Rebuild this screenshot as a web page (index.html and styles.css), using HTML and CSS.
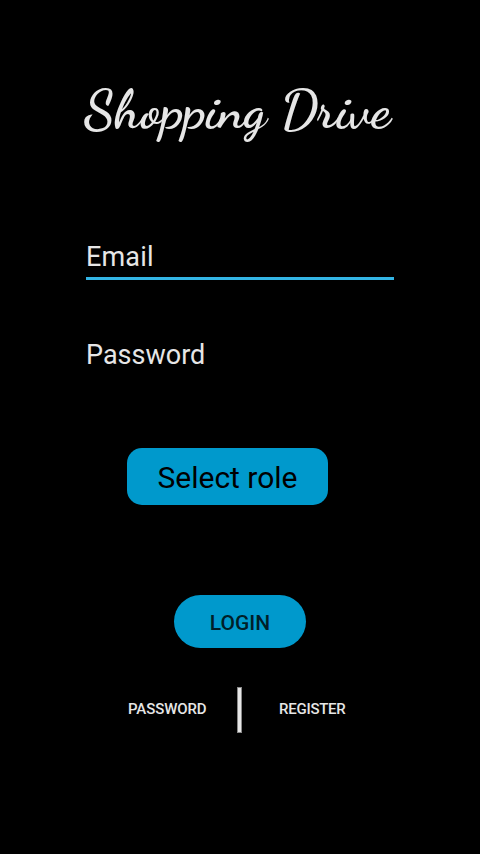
FILE: index.html
```
<!DOCTYPE html>
<html lang="en">
<head>
<meta charset="utf-8">
<title>Shopping Drive</title>
<link rel="stylesheet" href="styles.css">
</head>
<body>
<main class="screen">
  <h1 class="brand">Shopping Drive</h1>
  <form class="login-form">
    <div class="field field-active">Email</div>
    <div class="field">Password</div>
    <button class="role" type="button">Select role</button>
    <button class="login" type="button">LOGIN</button>
  </form>
  <nav class="links">
    <a class="link link-password">PASSWORD</a>
    <span class="divider"></span>
    <a class="link link-register">REGISTER</a>
  </nav>
</main>
</body>
</html>
```
FILE: styles.css
```
* { box-sizing: border-box; }
body {
  margin: 0;
  background: #000;
  color: #e6e6e6;
  font-family: Roboto, "Liberation Sans", sans-serif;
}
.screen {
  width: 480px;
  height: 854px;
  padding-top: 72px;
  display: flex;
  flex-direction: column;
  overflow: hidden;
}
.brand {
  margin: 0 0 0 84px;
  height: 76px;
  font: 700 54px/76px "Dancing Script", "Liberation Serif", serif;
  white-space: nowrap;
}
.login-form {
  margin-top: 88px;
  padding: 0 86px;
  display: flex;
  flex-direction: column;
}
.field {
  height: 44px;
  margin-bottom: 54px;
  font-size: 27px;
  line-height: 42px;
}
.field-active { border-bottom: 3px solid #33b5e5; letter-spacing: 0.15px; }
.role, .login {
  border: 0;
  padding: 0;
  background: #0099cc;
  color: #000;
  font-family: inherit;
}
.role {
  width: 201px;
  height: 57px;
  margin: 16px 0 0 41px;
  border-radius: 15px;
  font-size: 30px;
  line-height: 60px;
}
.login {
  width: 132px;
  height: 53px;
  margin: 90px 0 0 88px;
  border-radius: 27px;
  color: #001f29;
  font-size: 21px;
  font-weight: 500;
  line-height: 56px;
}
.links {
  display: flex;
  align-items: center;
  height: 46px;
  margin: 39px 0 0 128px;
  font-size: 15px;
  font-weight: 500;
  line-height: 44px;
}
.link { white-space: nowrap; height: 46px; letter-spacing: -0.1px; }
.link-password { width: 109px; }
.link-register { margin-left: 37px; letter-spacing: -0.25px; }
.divider {
  width: 5px;
  height: 46px;
  background: #e6e6e6;
  border: 1px solid #888;
}
```
